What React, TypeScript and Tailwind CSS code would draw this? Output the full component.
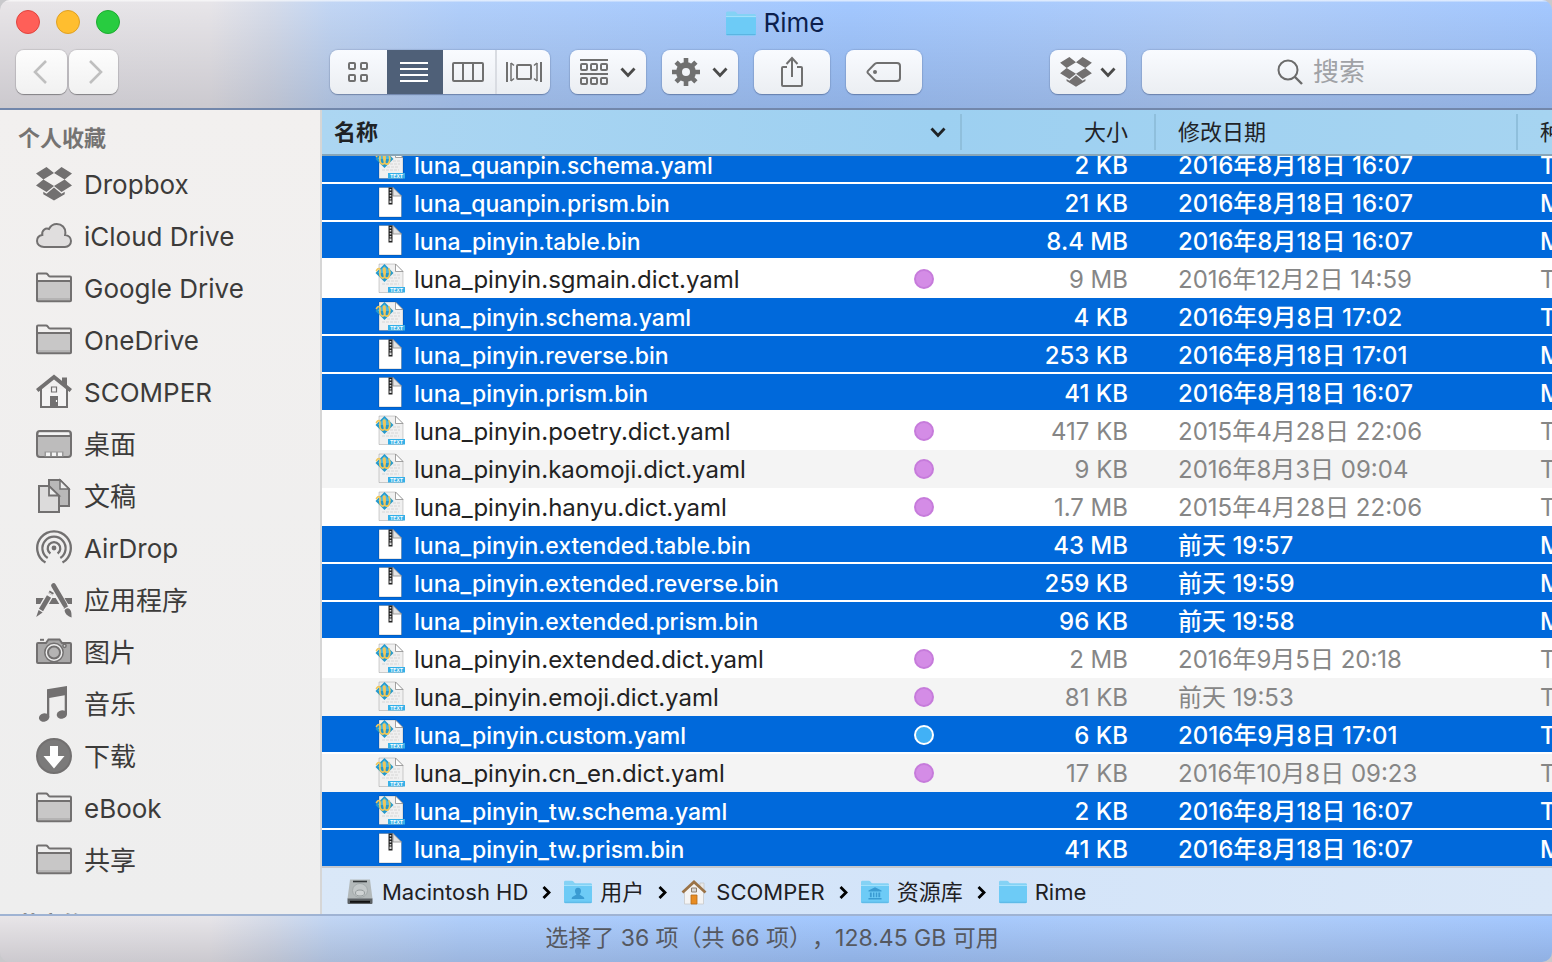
import { useLayoutEffect, useRef, type ReactNode } from 'react';

type FileKind = 'yaml' | 'bin';

interface FileRow {
  name: string;
  kind: FileKind;
  size: string;
  date: string;
  selected?: boolean;
  tag?: 'purple' | 'blue';
}

const files: FileRow[] = [
  { name: 'luna_quanpin.schema.yaml', kind: 'yaml', size: '2 KB', date: '2016年8月18日 16:07', selected: true },
  { name: 'luna_quanpin.prism.bin', kind: 'bin', size: '21 KB', date: '2016年8月18日 16:07', selected: true },
  { name: 'luna_pinyin.table.bin', kind: 'bin', size: '8.4 MB', date: '2016年8月18日 16:07', selected: true },
  { name: 'luna_pinyin.sgmain.dict.yaml', kind: 'yaml', size: '9 MB', date: '2016年12月2日 14:59', tag: 'purple' },
  { name: 'luna_pinyin.schema.yaml', kind: 'yaml', size: '4 KB', date: '2016年9月8日 17:02', selected: true },
  { name: 'luna_pinyin.reverse.bin', kind: 'bin', size: '253 KB', date: '2016年8月18日 17:01', selected: true },
  { name: 'luna_pinyin.prism.bin', kind: 'bin', size: '41 KB', date: '2016年8月18日 16:07', selected: true },
  { name: 'luna_pinyin.poetry.dict.yaml', kind: 'yaml', size: '417 KB', date: '2015年4月28日 22:06', tag: 'purple' },
  { name: 'luna_pinyin.kaomoji.dict.yaml', kind: 'yaml', size: '9 KB', date: '2016年8月3日 09:04', tag: 'purple' },
  { name: 'luna_pinyin.hanyu.dict.yaml', kind: 'yaml', size: '1.7 MB', date: '2015年4月28日 22:06', tag: 'purple' },
  { name: 'luna_pinyin.extended.table.bin', kind: 'bin', size: '43 MB', date: '前天 19:57', selected: true },
  { name: 'luna_pinyin.extended.reverse.bin', kind: 'bin', size: '259 KB', date: '前天 19:59', selected: true },
  { name: 'luna_pinyin.extended.prism.bin', kind: 'bin', size: '96 KB', date: '前天 19:58', selected: true },
  { name: 'luna_pinyin.extended.dict.yaml', kind: 'yaml', size: '2 MB', date: '2016年9月5日 20:18', tag: 'purple' },
  { name: 'luna_pinyin.emoji.dict.yaml', kind: 'yaml', size: '81 KB', date: '前天 19:53', tag: 'purple' },
  { name: 'luna_pinyin.custom.yaml', kind: 'yaml', size: '6 KB', date: '2016年9月8日 17:01', selected: true, tag: 'blue' },
  { name: 'luna_pinyin.cn_en.dict.yaml', kind: 'yaml', size: '17 KB', date: '2016年10月8日 09:23', tag: 'purple' },
  { name: 'luna_pinyin_tw.schema.yaml', kind: 'yaml', size: '2 KB', date: '2016年8月18日 16:07', selected: true },
  { name: 'luna_pinyin_tw.prism.bin', kind: 'bin', size: '41 KB', date: '2016年8月18日 16:07', selected: true },
];

function DropboxIcon({ className }: { className: string }) {
  return (
    <svg viewBox="0 0 36 34" className={className} fill="#727070" aria-hidden="true">
      <path d="M10.5 0 0 6.6l7.4 5.9L18 6zM25.5 0 36 6.6l-7.4 5.9L18 6zM0 18.5l7.4-6L18 19l-7.5 6zM36 18.5l-7.4-6L18 19l7.5 6z" />
      <path d="M18 20.6 10.5 26.8l-3.2-2v2.4L18 33.6l10.7-6.4v-2.4l-3.2 2z" />
    </svg>
  );
}

function SideSvg({ children }: { children: ReactNode }) {
  return (
    <svg viewBox="0 0 36 36" className="size-9 shrink-0" fill="none" stroke="#727070" strokeWidth="2" aria-hidden="true">
      {children}
    </svg>
  );
}

function SideFolder() {
  return (
    <SideSvg>
      <path d="M2 11h32v20H2z" fill="#c8c7c7" stroke="none" />
      <path d="M2 28h32v2H2z" fill="#b4b3b3" stroke="none" />
      <path d="M1 30.500V4.500q0-1 1-1h8q1 0 1.600.8l1.200 1.600q.5.600 1.400.600H34q1 0 1 1v23q0 .800-1 .800H2q-1 0-1-.800z" />
      <path d="M1 12.500q0-1.500 1.500-1.500h31q1.500 0 1.500 1.500" />
    </SideSvg>
  );
}

const sideIcons: Record<string, ReactNode> = {
  dropbox: <DropboxIcon className="h-9 w-9 shrink-0" />,
  cloud: (
    <SideSvg>
      <path
        d="M8 29C4 29 1 26.400 1 23c0-3.200 2.300-5.500 5.300-6C5.500 12.500 9.500 9.500 13 11c1.500-3 4.300-5 7.800-5 5 0 8.800 3.800 8.600 8.800l-.3 2.200c3.500.200 5.900 2.800 5.900 6 0 3.400-2.600 6-6 6z"
        fill="#e0dede"
      />
    </SideSvg>
  ),
  folder: <SideFolder />,
  home: (
    <SideSvg>
      <path d="M5 15v18h26V15" fill="#f4f3f3" />
      <path d="M4 33h28" />
      <path d="M26 10V3.500h5v10z" fill="#727070" stroke="none" />
      <path d="M0 15 18 .500 36 15l-2.400 3L18 5.500 2.400 18z" fill="#727070" stroke="none" />
      <path d="M15.500 13h5v5h-5z" strokeWidth="1.200" />
      <path d="M14 22h8v11h-8z" fill="#727070" stroke="none" />
      <path d="M20.500 26v2" stroke="#fff" strokeWidth="1.200" />
    </SideSvg>
  ),
  desktop: (
    <SideSvg>
      <rect x="1" y="5" width="34" height="26" rx="3" fill="#bdbcbc" />
      <path d="M3 6.500h30V9H3z" fill="#f4f4f4" stroke="none" />
      <path d="M1 10h34" />
      <path d="M8.500 25.500h19v5h-19z" fill="#999" stroke="none" />
      <path d="M10 26.500h4V30h-4zM16 26.500h4V30h-4zM22 26.500h4V30h-4z" fill="#f4f4f4" stroke="none" />
    </SideSvg>
  ),
  documents: (
    <SideSvg>
      <path d="M13 2h11l9 9v17H13z" fill="#b9b8b8" />
      <path d="M24 2v9h9z" fill="#eee" strokeWidth="1.500" />
      <path d="M3 8h10l10 10v16H3z" fill="#dcdbdb" />
      <path d="M13 8v9.500h10z" fill="#eee" strokeWidth="1.800" />
    </SideSvg>
  ),
  airdrop: (
    <SideSvg>
      <circle cx="18" cy="18" r="2.400" fill="#727070" stroke="none" />
      <g strokeWidth="2.300">
        <path d="M14.400 23.500a6.300 6.300 0 1 1 7.200 0" />
        <path d="M11.700 28a11.600 11.600 0 1 1 12.600 0" />
        <path d="M9.500 32.600a16.800 16.800 0 1 1 17 0" />
      </g>
    </SideSvg>
  ),
  apps: (
    <SideSvg>
      <path d="M0 16h36v6H0z" fill="#727070" stroke="none" />
      <path d="M19 4 1 35M17 4l16 27" stroke="#f0efef" strokeWidth="7.500" />
      <path d="M13 14.500 5 28" strokeWidth="4.800" />
      <path d="m15.800 9.800-1.400 2.400" strokeWidth="4.800" />
      <path d="m2.600 28 4 2.400L.200 35z" fill="#727070" stroke="none" />
      <path d="m17.500 3.500 11.300 19.200" strokeWidth="4.800" strokeLinecap="round" />
      <path d="m12.500 10.500 6 3.500" stroke="#f0efef" strokeWidth="1" />
      <path d="m29.500 24.500.600 1" strokeWidth="4.800" />
      <path d="M28.600 28.500c.8-2 3.400-3.200 5.200-1.200 2 2.400 1.600 4.700 1.800 8.200-3.400-1.300-6.400-3-7-7z" fill="#727070" stroke="none" />
    </SideSvg>
  ),
  camera: (
    <SideSvg>
      <path d="M4 5.800h4" />
      <path d="M2 9h8l2.500-3.500h11L26 9h8q1 0 1 1v18q0 1-1 1H2q-1 0-1-1V10q0-1 1-1z" fill="#a9a8a8" />
      <circle cx="18" cy="18.500" r="9.200" fill="#eee" strokeWidth="1.500" />
      <circle cx="18" cy="18.500" r="6" fill="#b5b4b4" />
      <circle cx="28.500" cy="11.800" r="1.600" fill="#ddd" strokeWidth="1.500" />
    </SideSvg>
  ),
  music: (
    <SideSvg>
      <g fill="#727070" stroke="none">
        <path d="M11 3.200 31 0v28h-2.300V9.300L13.300 12v19.500H11z" />
        <ellipse cx="8.100" cy="31.500" rx="5.200" ry="4.200" transform="rotate(-14 8.100 31.500)" />
        <ellipse cx="25.900" cy="28.500" rx="5.200" ry="4.200" transform="rotate(-14 25.900 28.500)" />
      </g>
    </SideSvg>
  ),
  downloads: (
    <SideSvg>
      <circle cx="18" cy="18" r="17" fill="#7b7a7a" />
      <path d="M14 8h8v10h6.500L18 30.500 7.500 18H14z" fill="#fff" stroke="none" />
    </SideSvg>
  ),
};

const places: { label: string; icon: string }[] = [
  { label: 'Dropbox', icon: 'dropbox' },
  { label: 'iCloud Drive', icon: 'cloud' },
  { label: 'Google Drive', icon: 'folder' },
  { label: 'OneDrive', icon: 'folder' },
  { label: 'SCOMPER', icon: 'home' },
  { label: '桌面', icon: 'desktop' },
  { label: '文稿', icon: 'documents' },
  { label: 'AirDrop', icon: 'airdrop' },
  { label: '应用程序', icon: 'apps' },
  { label: '图片', icon: 'camera' },
  { label: '音乐', icon: 'music' },
  { label: '下载', icon: 'downloads' },
  { label: 'eBook', icon: 'folder' },
  { label: '共享', icon: 'folder' },
];

function BlueFolder({ className, children }: { className: string; children?: ReactNode }) {
  return (
    <svg viewBox="0 0 30 25" className={className} aria-hidden="true">
      <path d="M0 2Q0 .500 1.500.500h7q1 0 1.600.700l1 1.300q.4.500 1.400.500h16q1.500 0 1.500 1.500V12H0z" fill="#84d2f5" />
      <path d="M0 6h30v17q0 1.500-1.500 1.500h-27Q0 24.500 0 23z" fill="#6dcbf6" />
      <path d="M0 5.600h30" stroke="#a8e2fb" strokeWidth="1" />
      <path d="M.500 23.500h29" stroke="#5bb5e2" strokeWidth="1" />
      {children}
    </svg>
  );
}

function DiskIcon() {
  return (
    <svg viewBox="0 0 28 28" className="size-7 shrink-0" aria-hidden="true">
      <path d="M4 1.500h20L26.500 21h-25z" fill="#b3b9ba" />
      <path d="M1.500 20.500h25V25q0 1-1 1h-23q-1 0-1-1z" fill="#5c6164" />
      <path d="M4 23.800h20" stroke="#111" strokeWidth="2" />
      <path d="M7 3.500h14" stroke="#34383a" strokeWidth="1.600" />
      <ellipse cx="14" cy="12.500" rx="7.500" ry="7" fill="#c3c8c9" stroke="#a3aaab" />
      <ellipse cx="14" cy="15" rx="4.500" ry="3" fill="#cfd3d4" stroke="#949b9c" />
    </svg>
  );
}

function HouseIcon() {
  return (
    <svg viewBox="0 0 28 28" className="size-7 shrink-0" aria-hidden="true">
      <path d="M20 5h4v7h-4z" fill="#e9e9e9" stroke="#c5c5c5" strokeWidth=".800" />
      <path d="M4.500 13 14 4l9.500 9v13h-19z" fill="#f4f4f4" stroke="#c9c9c9" strokeWidth=".800" />
      <path d="M2.500 14.500 14 4l11.500 10.500" fill="none" stroke="#9a7347" strokeWidth="2.800" />
      <path d="M11.500 10h5v4h-5z" fill="#d8d8d8" stroke="#8d7f6d" />
      <path d="M11 17h6v9h-6z" fill="#e88c22" stroke="#b56a16" strokeWidth=".800" />
    </svg>
  );
}

function FileIcon({ kind }: { kind: FileKind }) {
  if (kind === 'bin') {
    return (
      <svg viewBox="0 0 32 32" className="size-8 shrink-0" aria-hidden="true">
        <path d="M5 1.500h14l8.500 8.500v21H5z" fill="#fff" stroke="#000" strokeOpacity=".25" strokeWidth=".800" />
        <path d="M19 1.500V10h8.500z" fill="#e4e4e4" stroke="#8e8e8e" strokeWidth=".800" />
        <path d="M16.500 1.500v17" stroke="#222" strokeWidth="4" />
        <path d="M16.500 3v11" stroke="#d8d8d8" strokeWidth="1.600" strokeDasharray="1.500 1.500" />
        <path d="M15.500 14.500h2v2.500h-2z" fill="#ddd" />
      </svg>
    );
  }
  return (
    <svg viewBox="0 0 32 32" className="size-8 shrink-0" aria-hidden="true">
      <path d="M5 2h16.500l7.500 7.500v21H5z" fill="#f0f0f0" stroke="#000" strokeOpacity=".22" strokeWidth=".800" />
      <path d="M21.500 2v7.500H29z" fill="#fff" stroke="#8b8b8b" strokeWidth=".800" />
      <path d="M19 13h7M16 16h10M13 19h12M8 22h17" stroke="#d2d2d2" strokeWidth=".900" strokeDasharray="3 1" />
      <path d="M10.500 2 19.500 11l-9 9-9-9z" fill="#2499cc" />
      <path d="m10.500 4 7 7h-14z" fill="#4db8e0" />
      <path
        d="M2.500 8.500C4 6 6.300 6 6 9c-.4 4 .2 7.200 2.500 7.200 2.400 0 3-4 2.500-9-.2-1.700-1.700-1.500-1.500.3.4 4.500.8 8.700 3.200 8.700 2.600 0 4.200-5.500 2.300-9.400"
        fill="none"
        stroke="#eec75c"
        strokeWidth="1.700"
        strokeLinecap="round"
      />
      <path d="M14 25h17v5.500H14z" fill="#35b0e8" />
      <text x="22.500" y="29.700" textAnchor="middle" fontSize="5" fontWeight="700" fill="#fff" fontFamily="Inter, sans-serif">
        TEXT
      </text>
    </svg>
  );
}

function Chevron({ dir, className }: { dir: 'down' | 'right'; className: string }) {
  return (
    <svg viewBox="0 0 16 16" className={className} fill="none" stroke="currentColor" strokeWidth="2.800" aria-hidden="true">
      <path d={dir === 'down' ? 'M1.500 4.500 8 11.500l6.500-7' : 'M5.500 3l5.500 5.500L5.500 14'} />
    </svg>
  );
}

const toolButton =
  'flex h-11 items-center justify-center rounded-lg bg-linear-to-b from-[#f9fbff] to-[#ebeef2] text-[#4a4a4a] shadow-[0_0_1px_1px_rgba(60,80,120,0.16),0_1px_1px_rgba(40,60,100,0.35)]';

function Titlebar() {
  return (
    <header className="shrink-0 border-b-2 border-[#7287ab] bg-[linear-gradient(to_bottom,rgba(255,255,255,0.6)_0,rgba(255,255,255,0.6)_1px,rgba(0,0,20,0)_2px,rgba(0,0,20,0.12)_100%),linear-gradient(to_right,#e8e5e8_0,#e7e5e9_210px,#d6dcea_270px,#c2d6f4_330px,#b1cffb_460px,#a3c8ff_850px,#b1cefa_1230px,#a4c8ff_1552px)]">
      <div className="grid h-11 grid-cols-[1fr_auto_1fr] items-center px-4">
        <div className="flex gap-4">
          <button aria-label="关闭" className="size-6 rounded-full border border-[#e0443e] bg-[#ff5f58]" />
          <button aria-label="最小化" className="size-6 rounded-full border border-[#dfa023] bg-[#ffbe2f]" />
          <button aria-label="缩放" className="size-6 rounded-full border border-[#1dab30] bg-[#28cc40]" />
        </div>
        <h1 className="flex items-center gap-2 pt-0.5 pr-0.5 text-[26px] leading-8 text-[#0c1f4d]">
          <BlueFolder className="h-[25px] w-[30px]" />
          Rime
        </h1>
      </div>
      <div className="mt-1.5 flex items-center px-4 pb-3.5">
        <div className="flex w-[314px] gap-0.5">
          <button aria-label="后退" className="flex h-11 w-[51px] items-center justify-center rounded-lg bg-linear-to-b from-[#fdfdfd] to-[#f1f1f1] pr-1 shadow-[0_0_1px_1px_rgba(0,0,0,0.1),0_1px_1px_rgba(0,0,0,0.3)]">
            <svg viewBox="0 0 14 24" className="h-6 w-3.5" fill="none" stroke="#bfbfbf" strokeWidth="2.600" aria-hidden="true">
              <path d="M13 1 2 12l11 11" />
            </svg>
          </button>
          <button aria-label="前进" className="flex h-11 w-[49px] items-center justify-center rounded-lg bg-linear-to-b from-[#fdfdfd] to-[#f1f1f1] pl-1 shadow-[0_0_1px_1px_rgba(0,0,0,0.1),0_1px_1px_rgba(0,0,0,0.3)]">
            <svg viewBox="0 0 14 24" className="h-6 w-3.5" fill="none" stroke="#bfbfbf" strokeWidth="2.600" aria-hidden="true">
              <path d="m1 1 11 11L1 23" />
            </svg>
          </button>
        </div>
        <div className="flex gap-5">
          <div className="flex h-11 overflow-hidden rounded-lg bg-linear-to-b from-[#f9fbff] to-[#ebeef2] shadow-[0_0_1px_1px_rgba(60,80,120,0.16),0_1px_1px_rgba(40,60,100,0.35)]">
            <button aria-label="图标显示" className="flex w-[57px] items-center justify-center">
              <svg viewBox="0 0 22 22" className="size-[22px]" fill="none" stroke="#707070" strokeWidth="2" aria-hidden="true">
                <rect x="1" y="2" width="6" height="6" rx="1" />
                <rect x="13" y="2" width="6" height="6" rx="1" />
                <rect x="1" y="14" width="6" height="6" rx="1" />
                <rect x="13" y="14" width="6" height="6" rx="1" />
              </svg>
            </button>
            <button aria-label="列表显示" className="flex w-14 items-center justify-center bg-[#4f6078] pr-0.5">
              <svg viewBox="0 0 28 20" className="h-5 w-7" stroke="#fff" strokeWidth="2" aria-hidden="true">
                <path d="M0 1h28M0 7h28M0 13h28M0 19h28" />
              </svg>
            </button>
            <button aria-label="分栏显示" className="flex w-[54px] items-center justify-center border-r-2 border-[#d9dce2] pr-0.5">
              <svg viewBox="0 0 32 20" className="h-5 w-8" fill="none" stroke="#707070" strokeWidth="2" aria-hidden="true">
                <rect x="1" y="1" width="30" height="18" rx="1" />
                <path d="M11 1v18M21 1v18" />
              </svg>
            </button>
            <button aria-label="封面流显示" className="flex w-[53px] items-center justify-center">
              <svg viewBox="0 0 36 20" className="h-5 w-9" fill="none" stroke="#707070" strokeWidth="2" aria-hidden="true">
                <rect x="11" y="3" width="14" height="14" rx="1" />
                <path d="M1 0v20M35 0v20" />
                <path d="M5 1v18M31 1v18" strokeWidth="1.500" />
                <path d="m5 1 3 2.500M5 19l3-2.500M31 1l-3 2.500M31 19l-3-2.500" strokeWidth="1.600" />
              </svg>
            </button>
          </div>
          <div className="flex gap-4">
            <button aria-label="排列" className={`${toolButton} w-[76px] gap-3`}>
              <svg viewBox="0 0 28 26" className="h-[26px] w-7" fill="none" stroke="#707070" strokeWidth="2" aria-hidden="true">
                <path d="M0 1h28M0 15h28" />
                <rect x="1" y="5" width="6" height="6" rx="1" />
                <rect x="11" y="5" width="6" height="6" rx="1" />
                <rect x="21" y="5" width="6" height="6" rx="1" />
                <rect x="1" y="19" width="6" height="6" rx="1" />
                <rect x="11" y="19" width="6" height="6" rx="1" />
                <rect x="21" y="19" width="6" height="6" rx="1" />
              </svg>
              <Chevron dir="down" className="size-4" />
            </button>
            <button aria-label="操作" className={`${toolButton} w-[76px] gap-3`}>
              <svg viewBox="0 0 28 28" className="size-7" fill="none" stroke="#707070" aria-hidden="true">
                <circle cx="14" cy="14" r="7" strokeWidth="6" />
                <path
                  d="M14 0v6M14 22v6M0 14h6M22 14h6M4.100 4.100l4.300 4.300M19.600 19.600l4.300 4.300M4.100 23.900l4.300-4.300M19.600 8.400l4.300-4.300"
                  strokeWidth="4.600"
                />
              </svg>
              <Chevron dir="down" className="size-4" />
            </button>
            <button aria-label="共享" className={`${toolButton} w-[76px]`}>
              <svg viewBox="0 0 24 32" className="h-8 w-6" fill="none" stroke="#707070" strokeWidth="2" aria-hidden="true">
                <path d="M7 11H3q-1 0-1 1v17q0 1 1 1h18q1 0 1-1V12q0-1-1-1h-4M12 21V2M6.500 8 12 2l5.500 6" />
              </svg>
            </button>
            <button aria-label="编辑标记" className={`${toolButton} w-[76px]`}>
              <svg viewBox="0 0 36 22" className="h-[22px] w-9" fill="none" stroke="#707070" strokeWidth="2" aria-hidden="true">
                <path d="M11 2h20q3 0 3 3v12q0 3-3 3H11q-1.500 0-2.600-1.200L2 12.200q-1-1.200 0-2.400l6.400-6.600Q9.500 2 11 2z" />
                <circle cx="9" cy="11" r="2" fill="#707070" stroke="none" />
              </svg>
            </button>
          </div>
        </div>
        <div className="ml-auto flex gap-4">
          <button aria-label="Dropbox" className={`${toolButton} w-[76px] gap-2`}>
            <DropboxIcon className="h-[30px] w-8" />
            <Chevron dir="down" className="size-4" />
          </button>
          <label className={`${toolButton} w-[394px] gap-2.5`}>
            <svg viewBox="0 0 26 26" className="size-[26px] shrink-0" fill="none" stroke="#6b6b6b" strokeWidth="2" aria-hidden="true">
              <circle cx="11" cy="11" r="9.500" />
              <path d="m17.500 17.500 7.500 7.500" strokeWidth="2.400" />
            </svg>
            <input
              type="text"
              aria-label="搜索"
              placeholder="搜索"
              className="w-[88px] bg-transparent text-[26px] leading-8 outline-none placeholder:text-[#a0a2a6]"
            />
          </label>
        </div>
      </div>
    </header>
  );
}

function Sidebar() {
  return (
    <aside className="w-[322px] shrink-0 overflow-hidden border-r-2 border-[#d6d6d6] bg-linear-to-b from-[#f2f0ef] to-[#eeeeee]">
      <h2 className="mt-3.5 pl-[18px] text-[22px] leading-7 font-bold text-[#757372]">个人收藏</h2>
      <ul className="mt-1.5">
        {places.map((place) => (
          <li key={place.label}>
            <a href="#" className="flex h-[52px] items-center gap-3 pl-9 text-[26px] leading-8 whitespace-nowrap text-[#3c3b3a]">
              {sideIcons[place.icon]}
              <span className="pt-0.5">{place.label}</span>
            </a>
          </li>
        ))}
      </ul>
      <h2 className="mt-6 pl-[18px] text-[22px] leading-7 font-bold text-[#757372]">共享的</h2>
    </aside>
  );
}

const headInner = 'flex h-9 items-center border-r-2 border-[#8fbfdc]';
const headCell = 'border-b-2 border-[#88a6b8] p-0 py-1 text-left font-normal';

function FileList() {
  const scroller = useRef<HTMLDivElement>(null);

  useLayoutEffect(() => {
    const el = scroller.current;
    if (el) el.scrollTop = el.scrollHeight;
  }, []);

  return (
    <div ref={scroller} className="min-h-0 flex-1 overflow-x-hidden overflow-y-auto bg-white [scrollbar-width:none]">
      <table className="w-full table-fixed border-separate border-spacing-0 whitespace-nowrap">
        <colgroup>
          <col />
          <col className="w-[194px]" />
          <col className="w-[362px]" />
          <col className="w-[34px]" />
        </colgroup>
        <thead className="sticky top-0 z-10 bg-linear-to-r from-[#acd6f2] via-[#9dd0f1] to-[#a6d4f1] text-[22px] leading-7 text-[#1f2326]">
          <tr>
            <th className={headCell} aria-sort="descending">
              <div className={`${headInner} justify-between pr-3.5 pl-3 font-bold`}>
                名称
                <Chevron dir="down" className="size-4" />
              </div>
            </th>
            <th className={headCell}>
              <div className={`${headInner} justify-end pr-[26px]`}>大小</div>
            </th>
            <th className={headCell}>
              <div className={`${headInner} pl-[22px]`}>修改日期</div>
            </th>
            <th className={headCell}>
              <div className="flex h-9 items-center overflow-hidden pl-[22px]">种类</div>
            </th>
          </tr>
        </thead>
        <tbody className="text-2xl">
          {files.map((file, i) => {
            const last = i === files.length - 1;
            const tone = file.selected
              ? 'bg-[#0069db] font-medium text-white'
              : i % 2 === 0
                ? 'bg-[#f4f4f4] text-[#868686]'
                : 'bg-white text-[#868686]';
            const edge = last ? '' : file.selected ? 'border-b-2 border-white' : i % 2 === 0 ? 'border-b-2 border-[#f4f4f4]' : 'border-b-2 border-white';
            const cell = `p-0 ${edge}`;
            return (
              <tr key={file.name} className={tone} aria-selected={!!file.selected}>
                <td className={cell}>
                  <div className="flex h-9 items-center gap-2 pr-7 pl-[52px]">
                    <FileIcon kind={file.kind} />
                    <span className={file.selected ? 'flex-1 pt-1 text-[23px] leading-8' : 'flex-1 pt-1 leading-8 text-[#222222]'}>{file.name}</span>
                    {file.tag === 'purple' && <span className="mt-0.5 size-5 rounded-full border-2 border-[#c67bdb] bg-[#d48ce6]" />}
                    {file.tag === 'blue' && <span className="mt-0.5 size-5 rounded-full border-2 border-white bg-[#41b1f6]" />}
                  </div>
                </td>
                <td className={cell}>
                  <div className="h-9 pt-1 pr-7 text-right leading-8">{file.size}</div>
                </td>
                <td className={cell}>
                  <div className="h-9 pt-1 pl-[22px] leading-8">{file.date}</div>
                </td>
                <td className={cell}>
                  <div className="h-9 overflow-hidden pt-1 pl-[22px] leading-8">{file.kind === 'yaml' ? 'Text' : 'MacBinary'}</div>
                </td>
              </tr>
            );
          })}
        </tbody>
      </table>
    </div>
  );
}

const crumbs: { label: string; icon: ReactNode }[] = [
  { label: 'Macintosh HD', icon: <DiskIcon /> },
  {
    label: '用户',
    icon: (
      <BlueFolder className="h-6 w-7 shrink-0">
        <path d="M15 8c2.300 0 3.400 1.600 3.200 3.800-.2 1.700-.8 2.700-1.400 3.200 0 1.500 5 1.600 5 5H8.200c0-3.400 5-3.500 5-5-.6-.5-1.200-1.500-1.400-3.200C11.600 9.600 12.700 8 15 8z" fill="#3a9bd2" />
      </BlueFolder>
    ),
  },
  { label: 'SCOMPER', icon: <HouseIcon /> },
  {
    label: '资源库',
    icon: (
      <BlueFolder className="h-6 w-7 shrink-0">
        <path d="M15 7.500 22 11v1H8v-1zM9.500 13h2v5h-2zM12.800 13h1.600v5h-1.600zM15.800 13h1.600v5h-1.600zM18.600 13h2v5h-2zM8 19h14v1.500H8z" fill="#3a9bd2" />
      </BlueFolder>
    ),
  },
  { label: 'Rime', icon: <BlueFolder className="h-6 w-7 shrink-0" /> },
];

function PathBar() {
  return (
    <nav aria-label="路径" className="shrink-0 border-t-2 border-[#c5c9cf] bg-linear-to-r from-[#dae8f8] via-[#d3e4f9] to-[#d9e7f8]">
      <ol className="flex h-[46px] items-center gap-2.5 px-6 pt-0.5 text-[22px] leading-7 text-[#1e2023]">
        {crumbs.map((crumb, i) => (
          <li key={crumb.label} className="flex items-center gap-2.5">
            {i > 0 && <Chevron dir="right" className="size-4 text-black" />}
            <a href="#" className="flex items-center gap-2 whitespace-nowrap">
              {crumb.icon}
              {crumb.label}
            </a>
          </li>
        ))}
      </ol>
    </nav>
  );
}

export default function App() {
  return (
    <div className="h-screen bg-[#c9c9cc] font-[Inter,'Noto_Sans_CJK_SC',sans-serif]">
      <div className="flex h-full flex-col overflow-hidden rounded-[10px]">
        <Titlebar />
        <div className="flex min-h-0 flex-1">
          <Sidebar />
          <main className="flex min-w-0 flex-1 flex-col">
            <FileList />
            <PathBar />
          </main>
        </div>
        <footer className="flex h-12 shrink-0 items-center justify-center border-t-2 border-[#9fb3d3] bg-[linear-gradient(to_bottom,rgba(0,0,20,0)_0,rgba(0,0,20,0.12)_100%),linear-gradient(to_right,#e8e5e8_0,#e7e5e9_210px,#d6dcea_270px,#c2d6f4_330px,#b1cffb_460px,#a3c8ff_850px,#b1cefa_1230px,#a4c8ff_1552px)] pr-2 pb-0.5 text-[23px] leading-7 text-[#55585f] [text-spacing-trim:space-all]">
          选择了 36 项（共 66 项），128.45 GB 可用
        </footer>
      </div>
    </div>
  );
}
